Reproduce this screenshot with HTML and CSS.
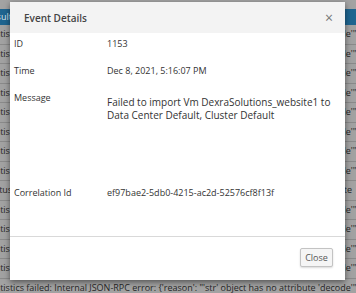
FILE: index.html
```html
<!DOCTYPE html>
<html>
<head>
<meta charset="utf-8">
<link rel="stylesheet" href="styles.css">
</head>
<body>
<div class="page">
  <div class="topstrip"></div>
  <div class="thead"><span class="cell">Results</span></div>
  <div class="rows">
    <div class="row"><span class="cell">Statistics failed: Internal JSON-RPC error: {'reason': "'str' object has no attribute 'decode'"}</span></div>
    <div class="row"><span class="cell">Statistics failed: Internal JSON-RPC error: {'reason': "'str' object has no attribute 'decode'"}</span></div>
    <div class="row"><span class="cell">Statistics failed: Internal JSON-RPC error: {'reason': "'str' object has no attribute 'decode'"}</span></div>
    <div class="row"><span class="cell">Statistics failed: Internal JSON-RPC error: {'reason': "'str' object has no attribute 'decode'"}</span></div>
    <div class="row"><span class="cell">Statistics failed: Internal JSON-RPC error: {'reason': "'str' object has no attribute 'decode'"}</span></div>
    <div class="row"><span class="cell">Statistics failed: Internal JSON-RPC error: {'reason': "'str' object has no attribute 'decode'"}</span></div>
    <div class="row"><span class="cell">Statistics failed: Internal JSON-RPC error: {'reason': "'str' object has no attribute 'decode'"}</span></div>
    <div class="row"><span class="cell">Statistics failed: Internal JSON-RPC error: {'reason': "'str' object has no attribute 'decode'"}</span></div>
    <div class="row row-split"><span class="cell">Status</span><span class="cell-end">Complete</span></div>
    <div class="row"><span class="cell">Statistics failed: Internal JSON-RPC error: {'reason': "'str' object has no attribute 'decode'"}</span></div>
    <div class="row"><span class="cell">Statistics failed: Internal JSON-RPC error: {'reason': "'str' object has no attribute 'decode'"}</span></div>
    <div class="row"><span class="cell">Statistics failed: Internal JSON-RPC error: {'reason': "'str' object has no attribute 'decode'"}</span></div>
    <div class="row"><span class="cell">Statistics failed: Internal JSON-RPC error: {'reason': "'str' object has no attribute 'decode'"}</span></div>
    <div class="row"><span class="cell">Statistics failed: Internal JSON-RPC error: {'reason': "'str' object has no attribute 'decode'"}</span></div>
  </div>
</div>

<div class="modal">
  <div class="modal-header">
    <span class="modal-title">Event Details</span>
    <span class="modal-close">&#215;</span>
  </div>
  <div class="modal-body">
    <div class="field">
      <div class="label">ID</div>
      <div class="value">1153</div>
    </div>
    <div class="field">
      <div class="label">Time</div>
      <div class="value">Dec 8, 2021, 5:16:07 PM</div>
    </div>
    <div class="field field-message">
      <div class="label">Message</div>
      <div class="value value-message">Failed to import Vm DexraSolutions_website1 to Data Center Default, Cluster Default</div>
    </div>
    <div class="field">
      <div class="label">Correlation Id</div>
      <div class="value">ef97bae2-5db0-4215-ac2d-52576cf8f13f</div>
    </div>
  </div>
  <div class="modal-footer">
    <button class="btn">Close</button>
  </div>
</div>
</body>
</html>
```

FILE: styles.css
```css
* { box-sizing: border-box; }
html, body {
  margin: 0;
  padding: 0;
  width: 356px;
  height: 293px;
  overflow: hidden;
  background: #a6a6a6;
  font-family: "Open Sans", "Liberation Sans", sans-serif;
}
.page {
  display: flex;
  flex-direction: column;
}
.topstrip {
  height: 9px;
  background: #a3a3a3;
}
.thead {
  height: 16px;
  background: #1f6590;
  color: #dfe8ef;
  font-size: 9px;
  line-height: 16px;
  overflow: hidden;
  white-space: nowrap;
}
.thead .cell { display: block; margin-left: -14px; }
.rows {
  display: flex;
  flex-direction: column;
}
.row {
  height: 19.5px;
  line-height: 18px;
  border-bottom: 1px solid #8a8a8a;
  background: #a2a2a2;
  color: #262626;
  font-size: 9px;
  white-space: nowrap;
  overflow: hidden;
}
.row .cell {
  display: block;
  margin-left: -13px;
}
.row-split {
  display: flex;
  justify-content: space-between;
}
.row-split .cell { margin-left: -14px; }
.row-split .cell-end { margin-right: 4px; }

.modal {
  position: absolute;
  left: 10px;
  top: 2px;
  width: 335px;
  height: 278px;
  background: #fff;
  box-shadow: 0 2px 6px rgba(0,0,0,0.5);
  display: flex;
  flex-direction: column;
  color: #333;
}
.modal-header {
  height: 31px;
  flex-shrink: 0;
  background: #f3f3f3;
  display: flex;
  align-items: center;
  justify-content: space-between;
  padding: 0 12px 0 14px;
}
.modal-title {
  font-size: 10px;
  font-weight: 600;
  color: #444;
}
.modal-close {
  font-size: 14px;
  color: #777;
  line-height: 1;
}
.modal-body {
  flex: 1;
  padding: 3.5px 0 0 4px;
  font-size: 9px;
  line-height: 13px;
}
.field {
  display: flex;
  height: 27px;
  align-items: flex-start;
}
.field-message {
  height: 95px;
}
.label {
  width: 93px;
  flex-shrink: 0;
}
.value {
  flex: 1;
}
.value-message {
  margin-top: 5px;
  padding-right: 8px;
  font-size: 10px;
}
.modal-footer {
  height: 44px;
  flex-shrink: 0;
  border-top: 1px solid #d9d9d9;
  display: flex;
  align-items: center;
  justify-content: flex-end;
  padding: 0 12px 2px 0;
}
.btn {
  font-family: "Open Sans", "Liberation Sans", sans-serif;
  font-size: 9px;
  color: #555;
  background: #f5f5f5;
  border: 1px solid #c3c3c3;
  border-radius: 2px;
  width: 33px;
  height: 19px;
  padding: 0;
  box-shadow: 0 1px 2px rgba(0,0,0,0.15);
}
```
